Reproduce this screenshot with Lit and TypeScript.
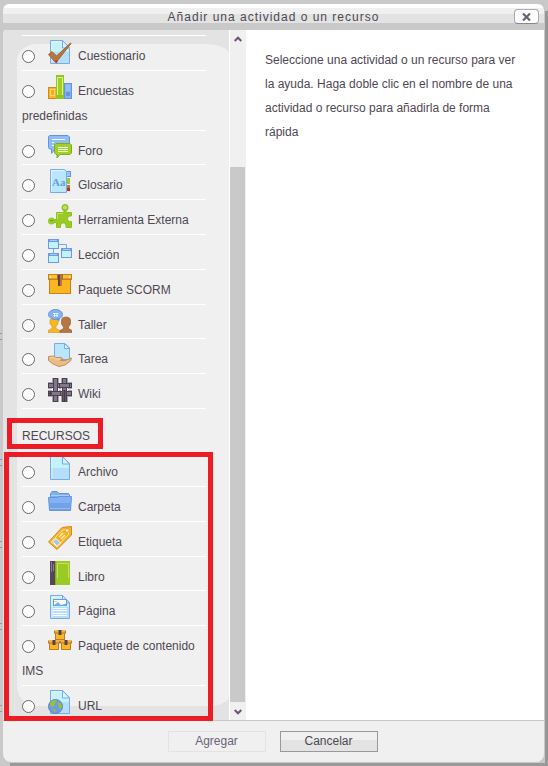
import { LitElement, html, css, svg } from "lit";
import { customElement, property, state } from "lit/decorators.js";

const page = svg`
  <path d="M2.5 .5H15L21.5 7V23.5H2.5Z" fill="#b5dff8"/>
  <path d="M3 1H15L21 7V12H3Z" fill="#c2f3fa"/>
  <path d="M4 22.5V2H14" fill="none" stroke="#dff6fd"/>
  <path d="M2.5 .5H14.5L21.5 7.5V23.5H2.5Z" fill="none" stroke="#79a9ee"/>
  <path d="M14.5 .5V8H21.5Z" fill="#d8f3fd" stroke="#79a9ee"/>`;

const windowBox = (x: number, y: number) => svg`
  <rect x=${x + 0.5} y=${y + 0.5} width="10" height="9" fill="#c2f3fa" stroke="#6c9be4"/>
  <path d=${`M${x} ${y + 1.5}h11`} stroke="#6c9be4" stroke-width="3"/>
  <path d=${`M${x + 2} ${y + 1.5}h7`} stroke="#a9c9fa"/>`;

const crate = (x: number, y: number) => svg`
  <rect x=${x + 1.5} y=${y + 2.5} width="9" height="7" fill="#f9b620" stroke="#c0772c"/>
  <path d=${`M${x} ${y + 2}h12`} stroke="#c0772c" stroke-width="3"/>
  <path d=${`M${x + 1} ${y + 1.5}h10`} stroke="#f9b620" stroke-width="2"/>
  <path d=${`M${x + 6} ${y}v5`} stroke="#504452" stroke-width="3"/>`;

const icons: Record<string, unknown> = {
  cuestionario: svg`${page}
    <path d="M.5 14.500L4 11.500L8.500 16L22.500 3L23 3.500L10.500 19.500L8 22.500L6.500 21.500Z" fill="#b87542" stroke="#a5662f" stroke-width="1"/>
    <path d="M7 20.500L8.500 23.500L10 20.500Z" fill="#dc2519"/>`,
  encuestas: svg`
    <rect x=".5" y="12.500" width="8" height="11" fill="#f9b620" stroke="#d88712"/>
    <rect x="2.500" y="14.500" width="4" height="6" fill="#f4ad1c" stroke="#fbd576"/>
    <rect x="8" y="0" width="8" height="24" fill="#94c622"/>
    <path d="M9.500 20V2.500H14.500V20" fill="#9ed126" stroke="#e2eda0"/>
    <rect x="16.500" y="8.500" width="7" height="15" fill="#86b3f2" stroke="#6394df"/>
    <rect x="18" y="10" width="4" height="6" fill="#93bff8"/>
    <rect x="18" y="17" width="4" height="4" fill="#6394df"/>`,
  foro: svg`
    <path d="M1.500 .5H20L21.500 2V10H8.500V14H7L3.500 18.500V14H1.500L.5 12.500V2Z" fill="#91bdf6" stroke="#6394df"/>
    <path d="M4 4.500H17M4 7.500H6M4 10.500H6" stroke="#f0f8ff"/>
    <path d="M8 8.500H22L23.500 10V18L22 19.500H12L9 23V19.500H8L6.500 18V10Z" fill="#a0d02a" stroke="#7fae18"/>
    <path d="M10 12.500H20M10 14.500H20M10 16.500H20" stroke="#f8fbe8"/>`,
  glosario: svg`
    <rect x="18.500" y="2.500" width="4" height="5" fill="#9cc8fa" stroke="#6394df"/>
    <rect x="19" y="9" width="3" height="6" fill="#a0c92a"/>
    <rect x="19" y="16" width="3" height="3" fill="#ba7440"/>
    <rect x="19" y="19" width="3" height="3" fill="#dc2519"/>
    <path d="M2.500 .5H16.500L18.500 2.500V23.500H2.500Z" fill="#b9e7f9" stroke="#79a9ee"/>
    <path d="M3.500 22.500V1.500H16" fill="none" stroke="#d8f8fc"/>
    <text x="4" y="17" font-family="Liberation Serif, serif" font-size="11" font-weight="bold" fill="#669de0">Aa</text>`,
  herramienta: svg`
    <circle cx="17" cy="3.500" r="2.800" fill="#c5de70" stroke="#94bf24" stroke-width="1.400"/>
    <circle cx="3.500" cy="17" r="3.500" fill="#9acb25"/>
    <path d="M16 6H18V8.500H23.500V12H21.500L19.500 14V16L21.500 17.500H23.500V23.500H18V21L16.500 19H14L12.500 21V23.500H8.500V18.500H5V15.500H8.500V8.500H16Z" fill="#9acb25" stroke="#8fc020"/>
    <path d="M9.500 15V9.500H15" fill="none" stroke="#bfe064"/>
    <path d="M2 16.500H5" stroke="#6f9a12"/>`,
  leccion: svg`
    <path d="M11 5.500H18.500V9M5.500 10V14" fill="none" stroke="#79a9ee"/>
    ${windowBox(0, 0)}${windowBox(13, 9)}${windowBox(0, 14)}`,
  scorm: svg`
    <rect x="1.500" y="5.500" width="21" height="14" fill="#f9b620" stroke="#c98218"/>
    <rect x=".5" y=".5" width="23" height="5" fill="#fac03a" stroke="#c98218"/>
    <path d="M1 4.500H23" stroke="#e59e1c"/>
    <path d="M2.500 2V4M21.500 2V4" stroke="#fde6ae"/>
    <rect x="9" y="0" width="6" height="6" fill="#a9683a"/>
    <rect x="10" y="1" width="3" height="11" fill="#5e4643"/>
    <rect x="12" y="1" width="2" height="11" fill="#ba7440"/>`,
  taller: svg`
    <path d="M0 23.500V21.500L4 19.500V17L2 15V11C2 9 10 9 10 11V15L8 17V19.500L12 21.500V23.500Z" fill="#f9b620" stroke="#d89020" stroke-width=".6"/>
    <path d="M12 23.500V21.500L15.500 19.500V18L13.500 15V11C13.500 7 22.500 7 22.500 11V15L20.500 18V19.500L24 21.500V23.500Z" fill="#b87542" stroke="#8f5930" stroke-width=".6"/>
    <ellipse cx="7.500" cy="5.500" rx="7" ry="5" fill="#85b2f2" stroke="#6394df"/>
    <path d="M9 9L11 13L12 9Z" fill="#6394df"/>
    <path d="M5 4.500H10.500M6.500 4V8M9 4V8M5.500 6.500H10" fill="none" stroke="#dff1ff"/>`,
  tarea: svg`
    <path d="M6.500 .5H17L21.500 5V16.500H6.500Z" fill="#b9e7f9" stroke="#79a9ee"/>
    <path d="M16.500 .5V5.500H21.500Z" fill="#d8f3fd" stroke="#79a9ee"/>
    <path d="M.5 13.500L5 13L8 14.500H13L15 16L12 17.500L17 17.500L23.500 15L22.500 18L17 22L11 23.500L5 21L.5 17.500Z" fill="#e9bd87" stroke="#c78d56"/>
    <path d="M2 14.500H6L8 16H12" fill="none" stroke="#f6d7ac"/>`,
  wiki: svg`
    <g fill="#82788c" stroke="#4a404f">
      <rect x=".5" y="5.500" width="23" height="4"/>
      <rect x=".5" y="13.500" width="23" height="4"/>
      <rect x="5.500" y=".5" width="4" height="23"/>
      <rect x="14.500" y=".5" width="4" height="23"/>
      <path d="M11.500 5.500H21.500V9.500H11.500ZM2.500 13.500H12.500V17.500H2.500Z"/>
    </g>
    <path d="M16.500 12V23M1 15.500H4" stroke="#453b4b" stroke-width="2"/>
    <path d="M4.500 0V5M10.500 0V5M13.500 0V5M19.500 0V5M4.500 18V24M10.500 18V24M13.500 18V24M19.500 18V24M0 4.500H4M20 4.500H24M0 18.500H4M20 18.500H24M0 10.500H4M20 10.500H24M0 12.500H4M20 12.500H24M11 10.500H13M11 12.500H13" stroke="#aaa6ae"/>`,
  archivo: page,
  carpeta: svg`
    <path d="M2.500 12V2.500L4 .5H9L11 2.500H20.500L21.500 4V12Z" fill="#82b0ef" stroke="#6394df"/>
    <path d="M3 4.500H21" stroke="#a9ccfb"/>
    <path d="M.5 6.500H9L11 5.500H23.500L22.500 19.500H1.500Z" fill="#84b1f1" stroke="#6394df"/>
    <path d="M2 12H22V19H2Z" fill="#73a1e6"/>
    <path d="M2 17.500H22" stroke="#8db9f5"/>`,
  etiqueta: svg`
    <path d="M.5 16L14 1.500L23.500 .5V9L9 23.500Z" fill="#f9b11d" stroke="#d98a14"/>
    <path d="M3 16L14.500 4L20.500 3.500V8.500L9 20.500Z" fill="none" stroke="#fde6ae"/>
    <path d="M5 15.500L8 12.500L12.500 17L9 20.500Z" fill="#9cc8ee" stroke="#fff"/>
    <path d="M11 11L15 7M13 13L17 9" stroke="#fff4d8" stroke-width="1.300"/>
    <circle cx="19" cy="4.500" r="1.800" fill="#f0f0f0" stroke="#d98a14" stroke-width=".6"/>`,
  libro: svg`
    <rect x="2" y="0" width="20" height="24" fill="#9acb25"/>
    <rect x="2" y="0" width="5" height="24" fill="#554759"/>
    <path d="M3.500 1V11M5.500 3V10" stroke="#8a7f91"/>
    <path d="M9.500 17V2.500H20.500V17" fill="none" stroke="#d8d86a"/>
    <path d="M7.500 0V24" stroke="#7fae18"/>`,
  pagina: svg`${page}
    <rect x="5.500" y="4.500" width="13" height="6" fill="#fff" stroke="#6c9be4"/>
    <path d="M6 10L10 7L13 10L18 8.500V10.500H6Z" fill="#7bb4ee"/>
    <path d="M6 6.500H9" stroke="#f6cf57"/>
    <path d="M5 13.500H19M5 15.500H19M5 18.500H19M5 20.500H19" stroke="#fff"/>`,
  ims: svg`${crate(6, 0)}${crate(0, 10)}${crate(12, 10)}`,
  url: svg`${page}
    <circle cx="7.500" cy="16.500" r="7" fill="#6f9be0" stroke="#5a88cf"/>
    <path d="M2 13L5 10.500L9 10L7 13L6 16L3 17ZM10 12L13 13.500L14 17L12 19.500L10.500 16ZM4 19L8 19.500L7 22.500Z" fill="#97c52a"/>`,
};

interface Item {
  icon: string;
  name: string;
}

const activities: Item[] = [
  { icon: "cuestionario", name: "Cuestionario" },
  { icon: "encuestas", name: "Encuestas predefinidas" },
  { icon: "foro", name: "Foro" },
  { icon: "glosario", name: "Glosario" },
  { icon: "herramienta", name: "Herramienta Externa" },
  { icon: "leccion", name: "Lección" },
  { icon: "scorm", name: "Paquete SCORM" },
  { icon: "taller", name: "Taller" },
  { icon: "tarea", name: "Tarea" },
  { icon: "wiki", name: "Wiki" },
];

const resources: Item[] = [
  { icon: "archivo", name: "Archivo" },
  { icon: "carpeta", name: "Carpeta" },
  { icon: "etiqueta", name: "Etiqueta" },
  { icon: "libro", name: "Libro" },
  { icon: "pagina", name: "Página" },
  { icon: "ims", name: "Paquete de contenido IMS" },
  { icon: "url", name: "URL" },
];

@customElement("module-option")
class ModuleOption extends LitElement {
  @property() icon = "";
  @property() name = "";
  @property({ type: Boolean }) checked = false;

  static styles = css`
    :host {
      display: block;
      flex: 1 0 auto;
      border-bottom: 1px solid #fff;
    }
    .option {
      display: block;
      padding: 4px 6px 0 0;
      line-height: 25px;
    }
    .radio {
      appearance: none;
      box-sizing: border-box;
      width: 13px;
      height: 13px;
      margin: 0 13px 0 0;
      border: 1px solid #6b6570;
      border-radius: 50%;
      background: #fff;
      vertical-align: -3px;
    }
    .radio:checked {
      background: radial-gradient(#504a54 3px, #fff 4px);
    }
    .icon {
      width: 24px;
      height: 24px;
      margin-right: 6px;
      vertical-align: -4px;
    }
  `;

  render() {
    return html`<label class="option"
      ><input
        class="radio"
        type="radio"
        name="module"
        .checked=${this.checked}
        @change=${() => this.dispatchEvent(new CustomEvent("pick", { detail: this.name }))}
      /><svg class="icon" viewBox="0 0 24 24" aria-hidden="true">${icons[this.icon]}</svg>${this.name}</label>`;
  }
}

@customElement("app-root")
class AppRoot extends LitElement {
  @state() private picked = "";

  static styles = css`
    :host {
      display: flex;
      box-sizing: border-box;
      min-height: 100vh;
      padding: 4px 3px 3px 3px;
      background:
        linear-gradient(#999, #999) 100% 11px / 3px 100% no-repeat,
        linear-gradient(#999, #999) 10px 100% / 100% 3px no-repeat,
        linear-gradient(#999 1px, transparent 1px 6px, #999 6px 7px, transparent 7px) 0 333px / 2px
          82px no-repeat,
        repeating-linear-gradient(#999 0 1px, transparent 1px 6px, #999 6px 7px, transparent 7px 82px)
          0 459px / 2px 280px no-repeat,
        #c9c9c9;
      color: #4f4853;
      font: 12px/24px "Liberation Sans", Arial, sans-serif;
    }
    .dialog {
      flex: 1;
      display: flex;
      flex-direction: column;
      min-width: 0;
      border: solid #c9c9c9;
      border-width: 0 1px 1px 0;
      border-radius: 8px;
      background: #c9c9c9;
    }
    .titlebar {
      display: grid;
      grid-template-columns: 1fr auto 1fr;
      align-items: center;
      height: 19px;
      margin-bottom: 7px;
      border-radius: 6px 6px 0 0;
      background: linear-gradient(#fff 4px, #f0f0f0 4px 10px, #e3e3e3 10px);
    }
    .title {
      grid-column: 2;
      margin: 6px 0 0;
      font-size: 12px;
      font-weight: normal;
      line-height: 13px;
      letter-spacing: 1px;
    }
    .close {
      display: grid;
      place-items: center;
      justify-self: end;
      align-self: start;
      width: 25px;
      height: 15px;
      margin: 5px 5px 0 0;
      padding: 0;
      border: 1px solid #aaa;
      border-bottom-color: #888;
      border-radius: 4px;
      background: #fff;
    }
    .close-icon {
      width: 9px;
      height: 8px;
    }
    .content {
      flex: 1;
      display: flex;
      background: #fff;
      border-top-left-radius: 4px;
    }
    .picker {
      position: relative;
      display: flex;
      flex-direction: column;
      flex: 0 0 226px;
      box-sizing: border-box;
      padding: 0 23px 0 19px;
      border-top-left-radius: 4px;
      background: #e3e3e3;
    }
    .picker::before {
      content: "";
      position: absolute;
      inset: 14px 0 14px 14px;
      border-radius: 20px 24px 20px 20px / 16px 10px 10px 20px;
      background: #f0f0f0;
    }
    .previous {
      flex: none;
      height: 5px;
      border-bottom: 1px solid #fff;
      position: relative;
    }
    .group {
      position: relative;
      display: flex;
      flex-direction: column;
    }
    .activities {
      flex: 4 0 auto;
    }
    .resources {
      flex: 3 0 auto;
    }
    .last {
      border-bottom: 0;
    }
    .resources::after {
      content: "";
      position: absolute;
      inset: 0 -7px -1px -18px;
      border: 5px solid #ed1c24;
      pointer-events: none;
    }
    .heading {
      position: relative;
      margin: 0;
      padding: 15px 0 3px;
      font-size: 12px;
      font-weight: normal;
      line-height: 25px;
    }
    .marked::after {
      content: "";
      position: absolute;
      box-sizing: border-box;
      left: -15px;
      top: 9px;
      width: 96px;
      height: 31px;
      border: 5px solid #ed1c24;
    }
    .scrollbar {
      flex: 0 0 15px;
      display: flex;
      flex-direction: column;
      align-items: center;
      border-left: 1px solid #fff;
      border-right: 1px solid #f0f0f0;
      background: #f0f0f0;
    }
    .arrow {
      width: 8px;
      height: 6px;
    }
    .up {
      margin-top: 6px;
    }
    .down {
      margin: 7px 0 5px;
    }
    .track {
      flex: 1;
      align-self: stretch;
      display: flex;
      flex-direction: column;
      justify-content: flex-end;
    }
    .thumb {
      height: 81%;
      background: #c9c9c9;
    }
    .help {
      flex: 1;
      margin: 0;
      padding: 18px 20px 18px 19px;
    }
    .footer {
      display: flex;
      justify-content: center;
      gap: 14px;
      padding: 10px 2px 10px 0;
      border-top: 1px solid #c9c9c9;
      border-radius: 0 0 8px 8px;
      background: #f0f0f0;
    }
    .button {
      box-sizing: border-box;
      width: 98px;
      height: 21px;
      padding: 0;
      border: 1px solid #999;
      background: linear-gradient(#f0f0f0 8px, #e3e3e3 8px);
      color: #4f4853;
      font: inherit;
      line-height: 17px;
    }
    .button:disabled {
      border-color: #e3e3e3;
      background: none;
      color: #6d6278;
    }
  `;

  private row = (item: Item, index: number, all: Item[]) => html`<module-option
    class=${all === resources && index === all.length - 1 ? "last" : ""}
    .icon=${item.icon}
    .name=${item.name}
    .checked=${this.picked === item.name}
    @pick=${() => (this.picked = item.name)}
  ></module-option>`;

  render() {
    return html`
      <section class="dialog" role="dialog" aria-labelledby="title">
        <header class="titlebar">
          <h1 class="title" id="title">Añadir una actividad o un recurso</h1>
          <button class="close" aria-label="Cerrar">
            <svg class="close-icon" viewBox="0 0 9 8" aria-hidden="true">
              <path d="M1 .5L8 7.500M8 .5L1 7.500" stroke="#6c5f7c" stroke-width="2.200" />
            </svg>
          </button>
        </header>
        <div class="content">
          <div class="picker">
            <div class="previous"></div>
            <div class="group activities">${activities.map(this.row)}</div>
            <h2 class="heading marked">RECURSOS</h2>
            <div class="group resources">${resources.map(this.row)}</div>
          </div>
          <div class="scrollbar" aria-hidden="true">
            <svg class="arrow up" viewBox="0 0 8 6">
              <path d="M.7 5L4 1.700L7.300 5" fill="none" stroke="#6c5182" stroke-width="2" />
            </svg>
            <div class="track"><div class="thumb"></div></div>
            <svg class="arrow down" viewBox="0 0 8 6">
              <path d="M.7 1L4 4.300L7.300 1" fill="none" stroke="#6c5182" stroke-width="2" />
            </svg>
          </div>
          <p class="help">
            Seleccione una actividad o un recurso para ver la ayuda. Haga doble clic en el nombre de
            una actividad o recurso para añadirla de forma rápida
          </p>
        </div>
        <footer class="footer">
          <button class="button" disabled>Agregar</button>
          <button class="button">Cancelar</button>
        </footer>
      </section>
    `;
  }
}
